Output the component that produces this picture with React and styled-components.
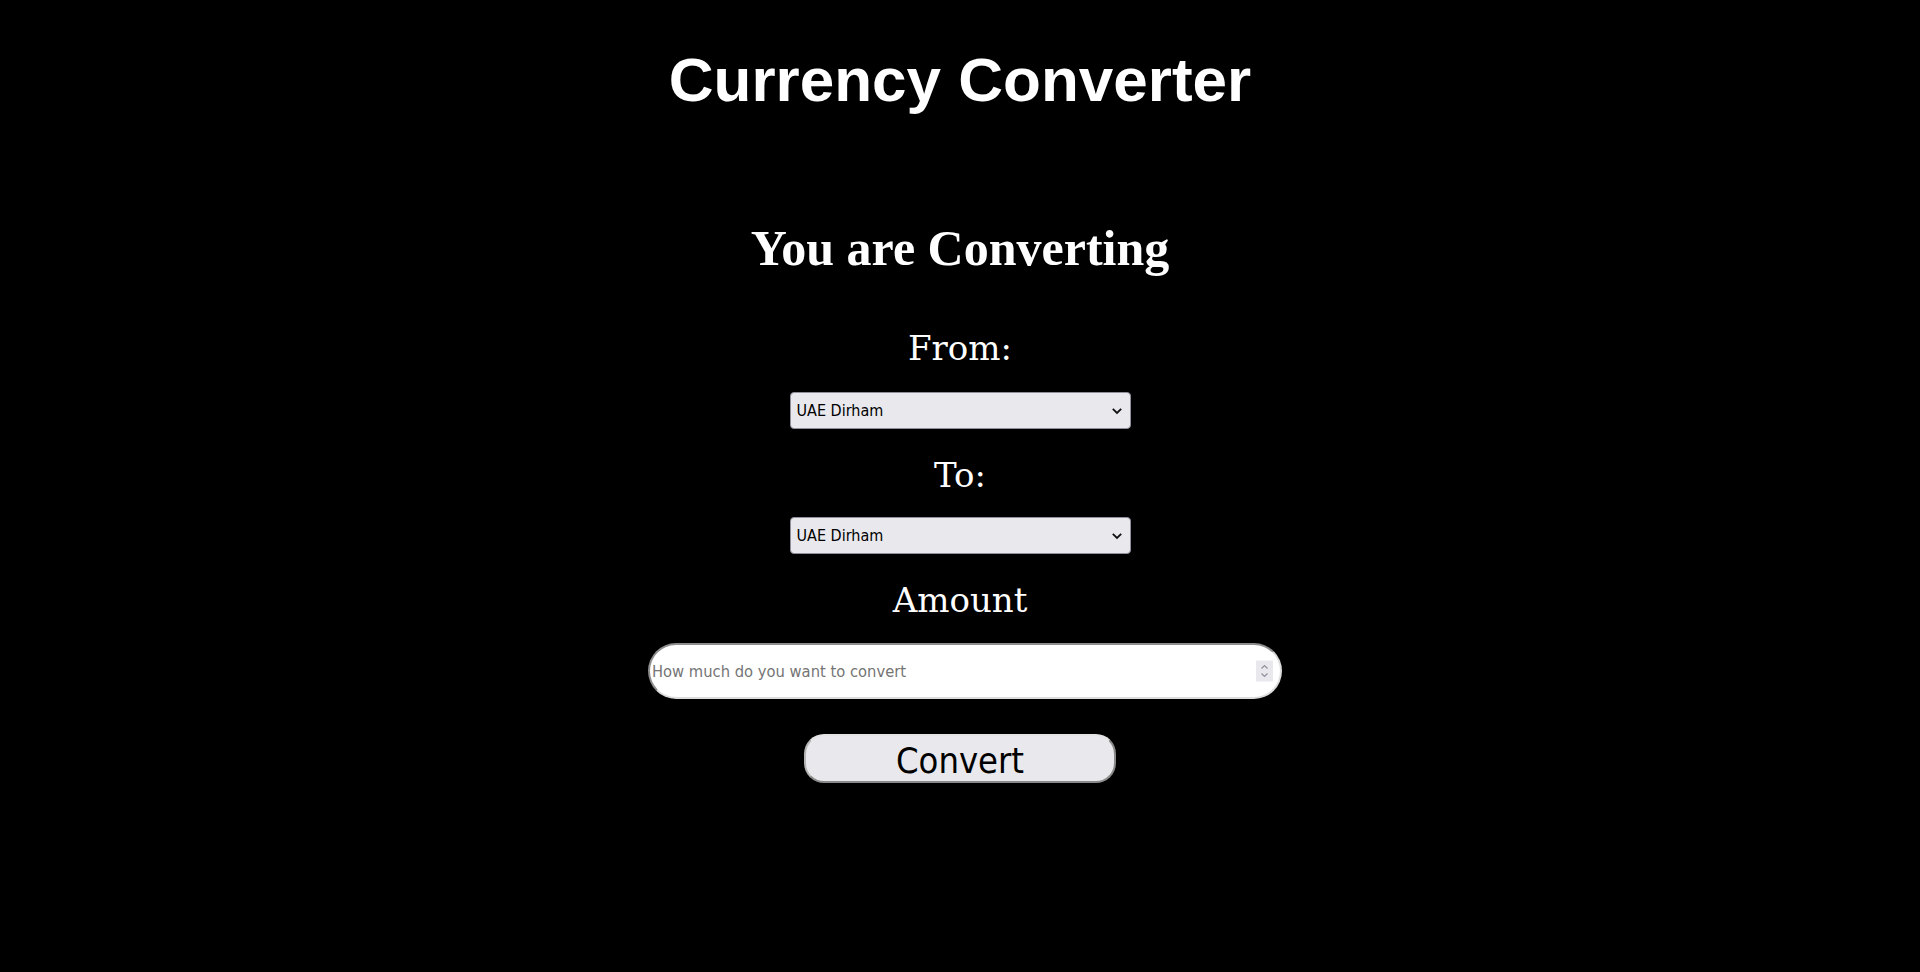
import React, { useState } from 'react';
import styled, { createGlobalStyle } from 'styled-components';

// --- Global ---

const GlobalStyle = createGlobalStyle`
  html, body {
    margin: 0;
    padding: 0;
    background: #000;
  }
  * {
    box-sizing: border-box;
  }
`;

const CURRENCIES = [
  ['AED', 'UAE Dirham'],
  ['AUD', 'Australian Dollar'],
  ['CAD', 'Canadian Dollar'],
  ['CHF', 'Swiss Franc'],
  ['CNY', 'Chinese Yuan'],
  ['EUR', 'Euro'],
  ['GBP', 'British Pound'],
  ['INR', 'Indian Rupee'],
  ['JPY', 'Japanese Yen'],
  ['USD', 'US Dollar'],
];

const uiFont = `"DejaVu Sans Condensed", "DejaVu Sans", Tahoma, sans-serif`;

// --- Styled Components ---

const Page = styled.main`
  display: flex;
  flex-direction: column;
  align-items: center;
  min-height: 100vh;
  padding-top: 44px;
  background: #000;
  color: #fff;
`;

const Title = styled.h1`
  margin: 0;
  font-family: "Liberation Sans", Arial, Helvetica, sans-serif;
  font-weight: 700;
  font-size: 62px;
  line-height: 72px;
`;

const Heading = styled.h2`
  margin: 103px 0 46px;
  font-family: "Liberation Serif", "Times New Roman", serif;
  font-weight: 700;
  font-size: 50px;
  line-height: 58px;
`;

const Form = styled.form`
  display: flex;
  flex-direction: column;
  align-items: center;
`;

const Label = styled.label`
  margin-bottom: ${({ $after }) => $after}px;
  font-family: "DejaVu Serif", Georgia, serif;
  font-weight: 400;
  font-size: 34px;
  line-height: 50px;
`;

const SelectWrap = styled.div`
  position: relative;
  margin-bottom: ${({ $after }) => $after}px;
`;

const Select = styled.select`
  appearance: none;
  display: block;
  width: 341px;
  height: 37px;
  padding: 0 26px 0 6px;
  border: 1px solid #8f8f9d;
  border-radius: 4px;
  background: #e9e9ed;
  color: #000;
  font-family: ${uiFont};
  font-size: 16px;
  outline: none;
`;

const Chevron = styled.svg`
  position: absolute;
  right: 8px;
  top: 50%;
  transform: translateY(-50%);
  pointer-events: none;
`;

const AmountWrap = styled.div`
  position: relative;
  margin: 0 0 35px 10px;
`;

const AmountInput = styled.input`
  display: block;
  width: 634px;
  height: 56px;
  padding: 1px 2px;
  border: 2px solid;
  border-color: #8d8d8d #dcdcdc #dcdcdc #8d8d8d;
  border-radius: 28px;
  background: #fff;
  color: #000;
  font-family: ${uiFont};
  font-size: 16.4px;
  outline: none;
  -moz-appearance: textfield;

  &::placeholder {
    color: #757575;
  }
  &::-webkit-inner-spin-button,
  &::-webkit-outer-spin-button {
    -webkit-appearance: none;
    margin: 0;
  }
`;

const Spinner = styled.div`
  position: absolute;
  right: 9px;
  top: 50%;
  transform: translateY(-50%);
  display: flex;
  align-items: center;
  justify-content: center;
  width: 17px;
  height: 21px;
  background: #e9e9ed;
  pointer-events: none;
`;

const ConvertButton = styled.button`
  width: 312px;
  height: 49px;
  padding: 4px 0 0;
  border: 2px solid;
  border-color: #e4e4e4 #8a8a8a #8a8a8a #b5b5b5;
  border-radius: 20px;
  background: #e9e9ed;
  color: #000;
  font-family: ${uiFont};
  font-size: 36px;
  line-height: 1;
  cursor: pointer;
`;

const CurrencySelect = ({ value, onChange, after }) => (
  <SelectWrap $after={after}>
    <Select value={value} onChange={(e) => onChange(e.target.value)}>
      {CURRENCIES.map(([code, name]) => (
        <option key={code} value={code}>{name}</option>
      ))}
    </Select>
    <Chevron width="12" height="8" viewBox="0 0 12 8">
      <polyline points="1.8,1.8 6,6 10.2,1.8" fill="none" stroke="#111" strokeWidth="1.8" />
    </Chevron>
  </SelectWrap>
);

const App = () => {
  const [from, setFrom] = useState('AED');
  const [to, setTo] = useState('AED');
  const [amount, setAmount] = useState('');

  return (
    <>
      <GlobalStyle />
      <Page>
        <Title>Currency Converter</Title>
        <Heading>You are Converting</Heading>
        <Form onSubmit={(e) => e.preventDefault()}>
          <Label $after={19}>From:</Label>
          <CurrencySelect value={from} onChange={setFrom} after={21} />
          <Label $after={17}>To:</Label>
          <CurrencySelect value={to} onChange={setTo} after={21} />
          <Label $after={18}>Amount</Label>
          <AmountWrap>
            <AmountInput
              type="number"
              placeholder="How much do you want to convert"
              value={amount}
              onChange={(e) => setAmount(e.target.value)}
            />
            <Spinner>
              <svg width="9" height="15" viewBox="0 0 9 15">
                <polyline points="1.5,5 4.5,2 7.5,5" fill="none" stroke="#8f8f9d" strokeWidth="1.2" />
                <polyline points="1.5,10 4.5,13 7.5,10" fill="none" stroke="#8f8f9d" strokeWidth="1.2" />
              </svg>
            </Spinner>
          </AmountWrap>
          <ConvertButton type="submit">Convert</ConvertButton>
        </Form>
      </Page>
    </>
  );
};

export default App;
